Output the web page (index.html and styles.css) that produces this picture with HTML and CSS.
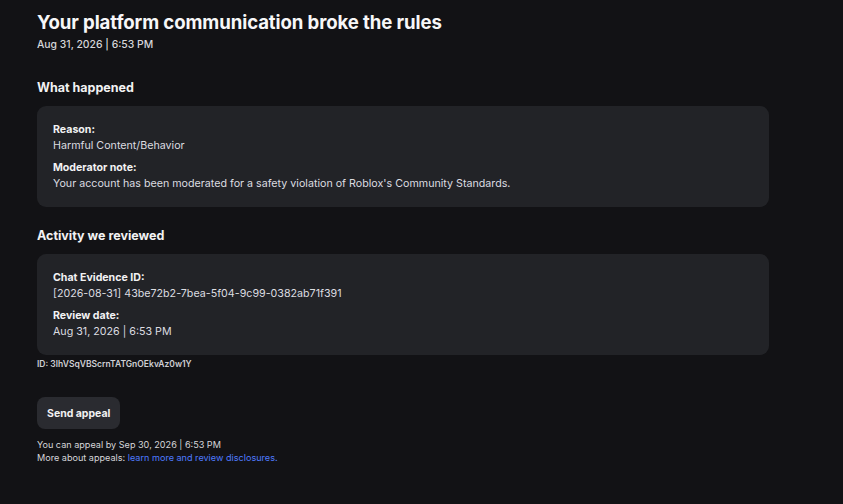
FILE: index.html
```html
<!DOCTYPE html>
<html>
<head>
<meta charset="utf-8">
<link rel="stylesheet" href="styles.css">
</head>
<body>
<main class="page">
  <header class="head">
    <h1 class="title">Your platform communication broke the rules</h1>
    <div class="date">Aug 31, 2026 | 6:53 PM</div>
  </header>

  <section class="section">
    <h2 class="section-title">What happened</h2>
    <div class="card">
      <div class="field">
        <div class="label">Reason:</div>
        <div class="value">Harmful Content/Behavior</div>
      </div>
      <div class="field">
        <div class="label">Moderator note:</div>
        <div class="value">Your account has been moderated for a safety violation of Roblox's Community Standards.</div>
      </div>
    </div>
  </section>

  <section class="section">
    <h2 class="section-title">Activity we reviewed</h2>
    <div class="card">
      <div class="field">
        <div class="label">Chat Evidence ID:</div>
        <div class="value">[2026-08-31] 43be72b2-7bea-5f04-9c99-0382ab71f391</div>
      </div>
      <div class="field">
        <div class="label">Review date:</div>
        <div class="value">Aug 31, 2026 | 6:53 PM</div>
      </div>
    </div>
    <div class="ref-id">ID: 3lhVSqVBScrnTATGnOEkvAz0w1Y</div>
  </section>

  <div class="appeal">
    <button class="btn" type="button">Send appeal</button>
    <p class="note">You can appeal by Sep 30, 2026 | 6:53 PM<br>More about appeals: <a class="link" href="#">learn more and review disclosures.</a></p>
  </div>
</main>
</body>
</html>
```

FILE: styles.css
```css
html, body {
  margin: 0;
  padding: 0;
  background: #121215;
}
body {
  font-family: Inter, "Noto Sans", "Liberation Sans", sans-serif;
  color: #f2f2f3;
}
.page {
  width: 732px;
  padding: 10px 0 0 37px;
}
.head {
  display: flex;
  flex-direction: column;
  gap: 4px;
}
.title {
  margin: 0;
  font-size: 18.6px;
  font-weight: 700;
  line-height: 24px;
  letter-spacing: -0.1px;
  color: #f7f7f8;
}
.date {
  font-size: 10.4px;
  font-weight: 500;
  line-height: 14px;
  color: #d6d6da;
}
.section {
  margin-top: 28px;
}
.section + .section {
  margin-top: 21px;
}
.section-title {
  margin: 0 0 10px;
  font-size: 12.5px;
  font-weight: 700;
  line-height: 16px;
}
.card {
  background: #222327;
  border-radius: 9px;
  padding: 16px 16px 15px;
  display: flex;
  flex-direction: column;
  gap: 6px;
}
.field {
  display: flex;
  flex-direction: column;
}
.label {
  font-size: 10.6px;
  font-weight: 700;
  line-height: 16px;
}
.value {
  font-size: 10.7px;
  font-weight: 400;
  line-height: 16px;
  color: #dcdce0;
}
.ref-id {
  margin-top: 4px;
  font-size: 8.5px;
  font-weight: 600;
  line-height: 11px;
  color: #cfcfd4;
}
.appeal {
  margin-top: 27px;
}
.btn {
  display: block;
  background: #2a2b30;
  color: #f2f2f3;
  border: 0;
  border-radius: 8px;
  height: 32px;
  padding: 0 10px;
  font-family: inherit;
  font-size: 10.5px;
  font-weight: 700;
}
.note {
  margin: 9px 0 0;
  font-size: 9.1px;
  line-height: 13px;
  color: #d6d6da;
}
.link {
  color: #4f7bff;
  text-decoration: none;
}
```
